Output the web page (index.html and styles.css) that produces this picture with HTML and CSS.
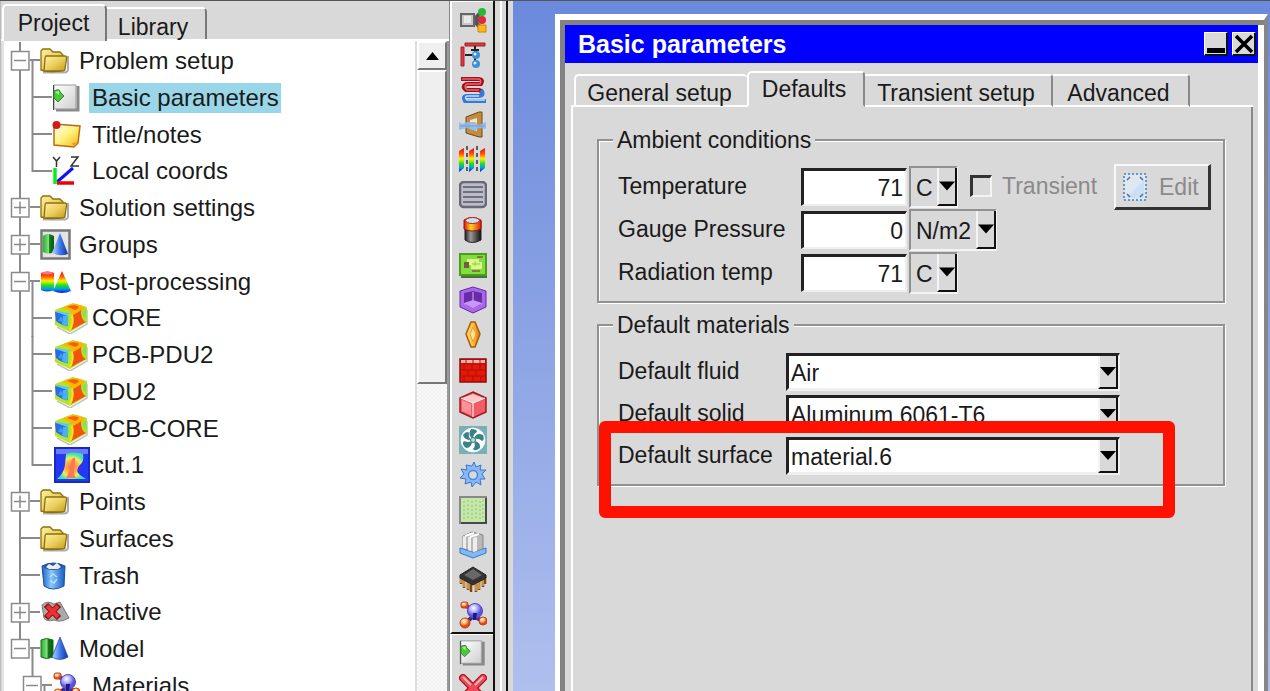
FILE: index.html
```html
<!DOCTYPE html>
<html lang="en">
<head>
<meta charset="utf-8">
<title>Basic parameters</title>
<link rel="stylesheet" href="styles.css">
</head>
<body>
<svg class="sprite" aria-hidden="true">
  <defs>
    <linearGradient id="gold" x1="0" y1="0" x2="1" y2="1"><stop offset="0" stop-color="#fff0a0"/><stop offset=".5" stop-color="#ecd060"/><stop offset="1" stop-color="#c09a18"/></linearGradient>
    <linearGradient id="note" x1="0" y1="0" x2="1" y2="1"><stop offset="0" stop-color="#fff"/><stop offset=".5" stop-color="#fff27a"/><stop offset="1" stop-color="#f0b010"/></linearGradient>
    <linearGradient id="page" x1="0" y1="0" x2="1" y2="1"><stop offset="0" stop-color="#fff"/><stop offset="1" stop-color="#cfcfcf"/></linearGradient>
    <linearGradient id="green"><stop offset="0" stop-color="#2fae2f"/><stop offset=".5" stop-color="#7fe07f"/><stop offset=".6" stop-color="#167a16"/><stop offset="1" stop-color="#0d5c0d"/></linearGradient>
    <linearGradient id="blue"><stop offset="0" stop-color="#b9d8ff"/><stop offset=".5" stop-color="#3f7be8"/><stop offset="1" stop-color="#1030a8"/></linearGradient>
    <linearGradient id="bin"><stop offset="0" stop-color="#1c62c8"/><stop offset=".4" stop-color="#8cc8f8"/><stop offset="1" stop-color="#155cc4"/></linearGradient>
    <linearGradient id="rain" x1="0" y1="0" x2="0" y2="1"><stop offset="0" stop-color="#f00020"/><stop offset=".25" stop-color="#ff5a00"/><stop offset=".45" stop-color="#fff000"/><stop offset=".65" stop-color="#20e020"/><stop offset=".82" stop-color="#00a0e0"/><stop offset="1" stop-color="#1010f0"/></linearGradient>
    <linearGradient id="cell"><stop offset="0" stop-color="#222"/><stop offset=".35" stop-color="#999"/><stop offset="1" stop-color="#111"/></linearGradient>
    <linearGradient id="celltop"><stop offset="0" stop-color="#e01010"/><stop offset=".4" stop-color="#ffd820"/><stop offset="1" stop-color="#e02010"/></linearGradient>
    <linearGradient id="gem"><stop offset="0" stop-color="#ffe28a"/><stop offset=".5" stop-color="#ffc040"/><stop offset="1" stop-color="#d87010"/></linearGradient>
    <radialGradient id="ball" cx=".4" cy=".3"><stop offset="0" stop-color="#fff"/><stop offset=".5" stop-color="#b4b4ff"/><stop offset="1" stop-color="#5c54d8"/></radialGradient>
    <radialGradient id="orange" cx=".4" cy=".3"><stop offset="0" stop-color="#fff"/><stop offset=".6" stop-color="#ffb060"/><stop offset="1" stop-color="#e04818"/></radialGradient>
    <radialGradient id="plume" cx=".5" cy=".55"><stop offset="0" stop-color="#ff7040"/><stop offset=".4" stop-color="#ffa850"/><stop offset=".7" stop-color="#e8f060"/><stop offset="1" stop-color="#40e0b0"/></radialGradient>
  </defs>

  <symbol id="g-plus" viewBox="4 0 36 37"><path class="guide" d="M20 0V9M20 28V37M30 18H40"/><path class="guide box" d="M11.500 9.500H29V28H11.500ZM14 18.500H26M20 12.500V25"/></symbol>
  <symbol id="g-open" viewBox="4 0 36 37"><path class="guide" d="M20 0V9M20 28V37M30 18H40M32.500 18V37"/><path class="guide box" d="M11.500 9.500H29V28H11.500ZM14 18.500H26"/></symbol>
  <symbol id="g-end" viewBox="4 0 36 37"><path class="guide" d="M20 0V9M30 18H40M32.500 18V37"/><path class="guide box" d="M11.500 9.500H29V28H11.500ZM14 18.500H26"/></symbol>
  <symbol id="g-leaf" viewBox="4 0 36 37"><path class="guide" d="M20 0V37M20 18H40"/></symbol>
  <symbol id="g-sub" viewBox="4 0 48 37"><path class="guide" d="M20 0V37M32.500 0V37M32 18H52"/></symbol>
  <symbol id="g-sublast" viewBox="4 0 48 37"><path class="guide" d="M20 0V37M32.500 0V19M32 18H52"/></symbol>
  <symbol id="g-subopen" viewBox="4 0 48 37"><path class="guide" d="M32.500 0V9M42 18H52M44.500 18V37"/><path class="guide box" d="M23.500 9.500H41V28H23.500ZM26 18.500H38"/></symbol>

  <symbol id="folder" viewBox="0 0 30 28"><path d="M3 25.500H25Q28 25 28 22V9" fill="none" stroke="#777" stroke-width="2" opacity=".6"/><path d="M1 23V4L3 2H10L13 5H20L23 8V23Q12 26 1 23Z" fill="url(#gold)" stroke="#8c7010" stroke-width="1.300"/><path d="M6 9H25Q27 9 26.500 12L25 22Q25 24 22 24H4L5 12Q5 10 6 9Z" fill="url(#gold)" stroke="#8c7010" stroke-width="1.300"/></symbol>
  <symbol id="pageicon" viewBox="0 0 30 30"><path d="M4 27H26V3" fill="none" stroke="#888" stroke-width="3"/><path d="M2 2H24V26H2Z" fill="url(#page)" stroke="#999"/><path d="M1.500 2V27" stroke="#444"/><path d="M2 8Q8 5 8 9L12 13L6 19L2 15Z" fill="#4cc83c" stroke="#2a8a24"/><path d="M3 9L7 8V12Z" fill="#a8f090"/></symbol>
  <symbol id="noteicon" viewBox="0 0 30 30"><path d="M2 4L28 6L26 23L22 27L2 25Z" fill="url(#note)" stroke="#c06a10" stroke-width="1.500"/><path d="M26 22L20 23L22 27Z" fill="#f0a020"/><circle cx="4.500" cy="5" r="4" fill="#d81818"/></symbol>
  <symbol id="axes" viewBox="0 0 30 32"><path d="M1 2L4.500 6L8 2M4.500 6V12M19 2H26L19 11H27" fill="none" stroke="#333" stroke-width="1.500"/><path d="M5 27L21 13" stroke="#1010f0" stroke-width="3"/><path d="M3 13V29" stroke="#00f020" stroke-width="3.500"/><path d="M5 28H22" stroke="#f00000" stroke-width="3.500"/></symbol>
  <symbol id="solids" viewBox="0 0 30 26"><path d="M1 4Q6 1 13 4V21Q6 24 1 21Z" fill="url(#green)" stroke="#157015"/><path d="M20 1L28 21Q20 26 12 21Z" fill="url(#blue)" stroke="#2040b0" stroke-width=".7"/></symbol>
  <symbol id="groups" viewBox="0 0 32 32"><path d="M1.500 1.500H29.500V29.500H1.500Z" fill="#e4e4e4" stroke="#777" stroke-width="2.500"/><path d="M3 7Q7 3 14 7V23Q8 26 3 23Z" fill="url(#green)"/><path d="M20 4L28 25Q20 28 12 24Z" fill="url(#blue)"/></symbol>
  <symbol id="post" viewBox="0 0 32 26"><path d="M1 4Q7 1 14 4V21Q7 24 1 21ZM22 2L31 22Q22 26 13 22Z" fill="url(#rain)"/><ellipse cx="7.500" cy="4" rx="6" ry="1.500" fill="#ff7080"/></symbol>
  <symbol id="cube" viewBox="0 0 34 32"><path d="M3 25L16 32L33 22V8" fill="none" stroke="#999" stroke-width="1.500" opacity=".6"/><path d="M1 8L19 1L33 5V20L16 30L1 23Z" fill="#b4e424"/><path d="M8 6Q14 2 22 2Q28 3 31 6Q28 9 25 11L17 12Q18 8 8 6Z" fill="#ffb400"/><path d="M13 5Q18 2 24 4Q26 6 21 8Q17 6 13 5Z" fill="#f46010"/><path d="M1 10Q7 10 14 14V24Q8 24 2 19Z" fill="#2a68f0"/><path d="M4 9L14 11L17 10L13 14L2 10Z" fill="#60c8e8"/><path d="M9 14L14 14Q15 21 13 25L8 22Z" fill="#48b4e8"/><path d="M4 19L7 14L10 20Z" fill="#3c9cf0"/><path d="M19 13Q25 10 27 8Q27 16 30 19L32 20L17 28Q20 20 19 13Z" fill="#f05410"/><path d="M18 13Q20 21 16 28" stroke="#ffe020" stroke-width="2" fill="none"/><path d="M32 7V16L29 14V9Z" fill="#80e060"/></symbol>
  <symbol id="cut" viewBox="0 0 36 36"><path d="M1 1H35V35H1Z" fill="#2438f4" stroke="#142cc0" stroke-width="2"/><path d="M2 2H34V7H2Z" fill="#6a7cf8"/><path d="M12 7Q18 4 29 7Q31 14 25 19Q21 24 26 28L32 32H3Q10 26 11 18Z" fill="url(#plume)"/><path d="M18 12Q22 8 21 16Q18 25 22 31H12Q17 22 17 16Z" fill="#ff7850"/></symbol>
  <symbol id="trash" viewBox="0 0 28 30"><path d="M2 5Q13 -1 25 5L24 25Q13 31 4 25Z" fill="url(#bin)" stroke="#1550a8"/><ellipse cx="13.500" cy="5.500" rx="10" ry="3.500" fill="#2458a0"/><path d="M6 6L9 3L13 5L17 2L21 6L18 8H9Z" fill="#eee"/><path d="M10 16L13 13L17 16M17 18L14 22L10 20" fill="none" stroke="#b8ddff" stroke-width="1.500"/></symbol>
  <symbol id="inactive" viewBox="0 0 30 24"><path d="M2 5Q7 0 14 4L20 2L29 18Q20 23 14 20Q6 22 4 18Z" fill="#aaa" stroke="#777"/><path d="M6 5L19 18M19 5L6 18" stroke="#801010" stroke-width="6"/><path d="M7 6L18 17M18 6L7 17" stroke="#f03030" stroke-width="4"/></symbol>
  <symbol id="molecule" viewBox="0 0 28 28"><path d="M6 22L15 15L23 20M5 4L15 9" stroke="#382890" stroke-width="4" fill="none"/><circle cx="16" cy="10" r="7.500" fill="url(#ball)" stroke="#5048c0"/><path d="M14 12H18L17 19H14Z" fill="#201880"/><rect x="2" y="1" width="7" height="6" rx="2" fill="url(#orange)" stroke="#c84018"/><circle cx="6" cy="22" r="5" fill="url(#orange)" stroke="#c84018"/><circle cx="24" cy="20" r="4" fill="url(#orange)" stroke="#c84018"/></symbol>

  <symbol id="t-assembly" viewBox="0 0 28 28"><path d="M15 14L22 6M15 14H22M15 15L22 22" stroke="#555" stroke-width="4"/><path d="M2 8H15V20H2Z" fill="#c8c8c8" stroke="#666" stroke-width="2"/><rect x="5" y="10" width="7" height="7" fill="#e8e8e8"/><circle cx="23" cy="6" r="4" fill="#28b838"/><circle cx="23" cy="14" r="4" fill="#e02838"/><path d="M19 19H27V26H19Z" fill="#ffb818" stroke="#d88000"/></symbol>
  <symbol id="t-network" viewBox="0 0 28 28"><path d="M6 2H26V5H6Z" fill="#e03840" stroke="#a02028"/><path d="M2 6H5V25H2Z" fill="#e03840" stroke="#a02028"/><path d="M16 5V24M6 14H16M12 9H20" stroke="#222" stroke-width="2" fill="none"/><circle cx="17" cy="14" r="4" fill="#3c90d8"/><circle cx="17" cy="23" r="4" fill="#3c90d8"/><circle cx="16" cy="13" r="1.500" fill="#d8f0ff"/><circle cx="16" cy="22" r="1.500" fill="#d8f0ff"/></symbol>
  <symbol id="t-coil" viewBox="0 0 28 28"><path d="M2 3H20Q25 4 22 8H8Q2 10 7 14H20Q24 15 22 18" fill="none" stroke="#a01018" stroke-width="4"/><path d="M3 3H20Q23 4 21 8H8Q4 10 8 14H20" fill="none" stroke="#f06068" stroke-width="1.500"/><path d="M22 14Q26 19 20 20H8Q3 20 6 25H27" fill="none" stroke="#3878d8" stroke-width="4"/><path d="M20 20H8Q5 21 8 24H26" fill="none" stroke="#c0e0ff" stroke-width="1.500"/></symbol>
  <symbol id="t-opening" viewBox="0 0 28 28"><path d="M7 6L20 1H23V26H20L7 22Z" fill="#c08c40" stroke="#6c4818"/><path d="M11 9L18 7V20L11 18Z" fill="#f4e4c0"/><path d="M0 11L3 13L8 11H16L20 14L27 11V18L20 17L16 20L8 17L0 19Z" fill="#90b8e8" opacity=".9"/><path d="M1 15H26" stroke="#6ca0e0"/></symbol>
  <symbol id="t-periodic" viewBox="0 0 28 28"><path d="M0 5L5 2V22L0 26ZM10 5L15 2V22L10 26ZM21 5L26 2V22L21 26Z" fill="url(#rain)"/><path d="M8 0V28M18 0V28" stroke="#333" stroke-width="1.500" stroke-dasharray="4 3"/></symbol>
  <symbol id="t-grille" viewBox="0 0 28 28"><rect x="1" y="1" width="26" height="25" rx="4" fill="#bcbcc8" stroke="#686878" stroke-width="2.500"/><path d="M4 6H24M4 11H24M4 16H24M4 21H24" stroke="#70707f" stroke-width="2"/></symbol>
  <symbol id="t-source" viewBox="0 0 28 28"><path d="M6 5V24Q13 29 22 24V5Z" fill="url(#cell)" stroke="#222"/><path d="M5 4Q13 -1 22 4V13Q13 17 5 13Z" fill="url(#celltop)" stroke="#a01010"/><ellipse cx="13.500" cy="4.500" rx="7" ry="3" fill="#c0e4f0" stroke="#c81818"/></symbol>
  <symbol id="t-board" viewBox="0 0 28 28"><path d="M2 26H28V5" stroke="#4c703c" stroke-width="2" fill="none"/><path d="M1 3H27V24H1Z" fill="#84dc40" stroke="#48a018" stroke-width="2"/><path d="M8 8H20V11H23V18H12V14H8Z" fill="#d8f890"/><rect x="5" y="11" width="5" height="6" fill="#70603c"/><path d="M18 6H24M13 20H21" stroke="#80602c" stroke-width="1.500"/><path d="M16 10V15M13 13H21" stroke="#90c838"/></symbol>
  <symbol id="t-room" viewBox="0 0 28 28"><path d="M14 1L27 5V21L14 27L1 21V5Z" fill="#a868e8" stroke="#6428a8"/><path d="M14 5L23 7V17L14 20L5 17V7Z" fill="#682ca8"/><path d="M14 6V16L5 18M14 16L23 18" stroke="#d8a8ff" fill="none"/><path d="M5 17L14 14L23 17L14 22Z" fill="#c898f8"/></symbol>
  <symbol id="t-plate" viewBox="0 0 28 28"><path d="M12 1H16L21 13L16 26H12L7 13Z" fill="url(#gem)" stroke="#a85c08" stroke-width="1.500"/><path d="M14 6L17 13L14 21L11 13Z" fill="#ffe08c" stroke="#f0a030"/></symbol>
  <symbol id="t-wall" viewBox="0 0 28 28"><path d="M1 3H27V26H1Z" fill="#e81808" stroke="#900808" stroke-width="1.500"/><path d="M2 4H26V7H2Z" fill="#ffb0b0"/><path d="M1 8H27M1 14H27M1 20H27M7 3V8M14 3V8M21 3V8M5 8V14M13 8V14M21 8V14M9 14V20M17 14V20M5 20V26M14 20V26M22 20V26" stroke="#a81008"/></symbol>
  <symbol id="t-block" viewBox="0 0 28 28"><path d="M14 1L27 7V21L14 27L1 21V7Z" fill="#f05c68" stroke="#a01820" stroke-width="1.500"/><path d="M14 3L25 7L14 12L3 7Z" fill="#ffc8c8"/><path d="M3 9L12 13V24L3 20Z" fill="#ff9098"/><path d="M14 12V26M14 12L26 7M14 12L2 7" stroke="#fff" fill="none"/></symbol>
  <symbol id="t-fan" viewBox="0 0 28 28"><rect width="28" height="28" fill="#78b0b8"/><circle cx="14" cy="14" r="12" fill="#fff" stroke="#e8f8f8"/><path d="M14 13Q8 9 12 3Q18 3 18 6Q14 8 14 13ZM15 13Q17 6 24 9Q26 14 23 15Q20 12 15 13ZM15 15Q22 16 21 22Q16 26 14 23Q17 20 15 15ZM13 15Q13 22 7 22Q2 18 5 15Q9 17 13 15ZM12 14Q5 14 4 9Q8 4 10 7Q9 11 12 14Z" fill="#3c8088"/><circle cx="14" cy="14" r="2.500" fill="#b8d8dc" stroke="#3c7880"/></symbol>
  <symbol id="t-blower" viewBox="0 0 28 28"><path d="M13 5L15 1L17 6L22 4L21 9L27 9L23 13L26 18L21 18L22 24L17 21L13 26L12 21L6 23L7 18L1 17L5 13L2 8L8 9L7 4Z" fill="#88b8f8" stroke="#3878c8"/><circle cx="14" cy="14" r="4.500" fill="#d9d9d9" stroke="#4888d8" stroke-width="1.500"/></symbol>
  <symbol id="t-resist" viewBox="0 0 28 28"><path d="M1 1H27V27H1Z" fill="#c4e8a8" stroke="#888" stroke-width="2"/><path d="M27 2V27H2" fill="none" stroke="#333" stroke-width="1.500"/><path d="M5 5V24M9 4V24M13 5V24M17 4V24M21 5V24M24 4V24" stroke="#90c078" stroke-dasharray="2 2"/></symbol>
  <symbol id="t-sink" viewBox="0 0 28 28"><path d="M1 17L14 21L27 17V22L14 27L1 22Z" fill="#80b8f8" stroke="#3878c8"/><path d="M4 5L13 1L24 4V18L14 21L4 17Z" fill="#b8b8b8" stroke="#888"/><path d="M4 5L7 6V18L4 17ZM9 6H12V20L9 19ZM14 7L18 6V20L14 21Z" fill="#eee"/><path d="M6 5L15 2M11 6L20 3" stroke="#fff" stroke-width="2"/></symbol>
  <symbol id="t-chip" viewBox="0 0 28 28"><path d="M2 11V18M5 14V22M9 16V24M12 18V26M17 18V26M20 16V24M24 14V21M26 11V18" stroke="#7c4810" stroke-width="2.500"/><path d="M2 12V17M5 14V21M9 16V23M17 18V25M20 16V23M24 14V20" stroke="#f0a840" stroke-width="1.500"/><path d="M14 1L27 9V12L14 19L1 12V9Z" fill="#333" stroke="#222"/><path d="M14 3L23 9L14 14L5 9Z" fill="#686868"/></symbol>
  <symbol id="t-delete" viewBox="0 0 28 28"><path d="M4 4L24 24M24 4L4 24" stroke="#a01820" stroke-width="8" stroke-linecap="round"/><path d="M4 4L24 24M24 4L4 24" stroke="#f04858" stroke-width="5.500" stroke-linecap="round"/><path d="M4 3L12 11M24 3L16 11" stroke="#ffb0b8" stroke-width="2"/></symbol>
  <symbol id="arrow" viewBox="0 0 16 9"><path d="M0 0H16L8 9Z"/></symbol>
  <symbol id="editicon" viewBox="0 0 26 30"><path d="M2 2H24V28H2Z" fill="#dfe8f0" stroke="#3c80c0" stroke-width="1.500" stroke-dasharray="2 2"/><path d="M4 26L22 8V26Z" fill="#c8e0f8"/><path d="M5 8L8 5M18 5L21 8M5 22L8 25M18 25L21 22" stroke="#668" stroke-width="1.500"/></symbol>
</svg>

<div class="app">
  <aside class="explorer">
    <div class="side-tabs" role="tablist">
      <button class="side-tab active" role="tab" aria-selected="true">Project</button>
      <button class="side-tab" role="tab">Library</button>
    </div>
    <div class="tree-pane">
      <ul class="tree">
        <li><svg class="g1"><use href="#g-open"/></svg><span class="icon"><svg width="30" height="28"><use href="#folder"/></svg></span><span class="name">Problem setup</span></li>
        <li><svg class="g2"><use href="#g-sub"/></svg><span class="icon"><svg width="30" height="30"><use href="#pageicon"/></svg></span><span class="name selected">Basic parameters</span></li>
        <li><svg class="g2"><use href="#g-sub"/></svg><span class="icon"><svg width="30" height="30"><use href="#noteicon"/></svg></span><span class="name">Title/notes</span></li>
        <li><svg class="g2"><use href="#g-sublast"/></svg><span class="icon"><svg width="30" height="32"><use href="#axes"/></svg></span><span class="name">Local coords</span></li>
        <li><svg class="g1"><use href="#g-plus"/></svg><span class="icon"><svg width="30" height="28"><use href="#folder"/></svg></span><span class="name">Solution settings</span></li>
        <li><svg class="g1"><use href="#g-plus"/></svg><span class="icon"><svg width="32" height="32"><use href="#groups"/></svg></span><span class="name">Groups</span></li>
        <li><svg class="g1"><use href="#g-open"/></svg><span class="icon"><svg width="32" height="26"><use href="#post"/></svg></span><span class="name">Post-processing</span></li>
        <li><svg class="g2"><use href="#g-sub"/></svg><span class="icon wide"><svg width="34" height="32"><use href="#cube"/></svg></span><span class="name">CORE</span></li>
        <li><svg class="g2"><use href="#g-sub"/></svg><span class="icon wide"><svg width="34" height="32"><use href="#cube"/></svg></span><span class="name">PCB-PDU2</span></li>
        <li><svg class="g2"><use href="#g-sub"/></svg><span class="icon wide"><svg width="34" height="32"><use href="#cube"/></svg></span><span class="name">PDU2</span></li>
        <li><svg class="g2"><use href="#g-sub"/></svg><span class="icon wide"><svg width="34" height="32"><use href="#cube"/></svg></span><span class="name">PCB-CORE</span></li>
        <li><svg class="g2"><use href="#g-sublast"/></svg><span class="icon wide"><svg width="36" height="36"><use href="#cut"/></svg></span><span class="name">cut.1</span></li>
        <li><svg class="g1"><use href="#g-plus"/></svg><span class="icon"><svg width="30" height="28"><use href="#folder"/></svg></span><span class="name">Points</span></li>
        <li><svg class="g1"><use href="#g-leaf"/></svg><span class="icon"><svg width="30" height="28"><use href="#folder"/></svg></span><span class="name">Surfaces</span></li>
        <li><svg class="g1"><use href="#g-leaf"/></svg><span class="icon"><svg width="28" height="30"><use href="#trash"/></svg></span><span class="name">Trash</span></li>
        <li><svg class="g1"><use href="#g-plus"/></svg><span class="icon"><svg width="30" height="24"><use href="#inactive"/></svg></span><span class="name">Inactive</span></li>
        <li><svg class="g1"><use href="#g-end"/></svg><span class="icon"><svg width="30" height="26"><use href="#solids"/></svg></span><span class="name">Model</span></li>
        <li><svg class="g2"><use href="#g-subopen"/></svg><span class="icon"><svg width="28" height="28"><use href="#molecule"/></svg></span><span class="name">Materials</span></li>
      </ul>
      <div class="scrollbar">
        <button class="scroll-up" aria-label="Scroll up"><svg width="13" height="8" viewBox="0 0 13 8"><path d="M0 8H13L6.500 0Z"/></svg></button>
        <div class="thumb"></div>
      </div>
    </div>
  </aside>

  <nav class="toolbar" aria-label="Objects">
    <div class="tools">
      <button aria-label="Assembly"><svg><use href="#t-assembly"/></svg></button>
      <button aria-label="Network"><svg><use href="#t-network"/></svg></button>
      <button aria-label="Heat exchanger"><svg><use href="#t-coil"/></svg></button>
      <button aria-label="Opening"><svg><use href="#t-opening"/></svg></button>
      <button aria-label="Periodic boundary"><svg><use href="#t-periodic"/></svg></button>
      <button aria-label="Grille"><svg><use href="#t-grille"/></svg></button>
      <button aria-label="Source"><svg><use href="#t-source"/></svg></button>
      <button aria-label="Circuit board"><svg><use href="#t-board"/></svg></button>
      <button aria-label="Enclosure"><svg><use href="#t-room"/></svg></button>
      <button aria-label="Plate"><svg><use href="#t-plate"/></svg></button>
      <button aria-label="Wall"><svg><use href="#t-wall"/></svg></button>
      <button aria-label="Block"><svg><use href="#t-block"/></svg></button>
      <button aria-label="Fan"><svg><use href="#t-fan"/></svg></button>
      <button aria-label="Blower"><svg><use href="#t-blower"/></svg></button>
      <button aria-label="Resistance"><svg><use href="#t-resist"/></svg></button>
      <button aria-label="Heat sink"><svg><use href="#t-sink"/></svg></button>
      <button aria-label="Package"><svg><use href="#t-chip"/></svg></button>
      <button aria-label="Materials"><svg><use href="#molecule"/></svg></button>
    </div>
    <div class="tools actions">
      <button aria-label="Edit object"><svg><use href="#pageicon"/></svg></button>
      <button aria-label="Delete object"><svg><use href="#t-delete"/></svg></button>
    </div>
  </nav>
  <div class="sash"><div class="sash-line"></div></div>

  <main class="canvas">
    <section class="dialog" aria-labelledby="dialog-title">
      <header class="titlebar">
        <h1 id="dialog-title">Basic parameters</h1>
        <button class="winbtn" aria-label="Minimize"><svg width="20" height="20" viewBox="0 0 20 20"><path d="M1 14H19V19H1Z"/></svg></button>
        <button class="winbtn" aria-label="Close"><svg width="20" height="20" viewBox="0 0 20 20"><path d="M2 2L18 18M18 2L2 18" stroke="#000" stroke-width="3.500"/></svg></button>
      </header>
      <div class="tabs" role="tablist">
        <span class="tab-gap"></span>
        <button class="tab first" role="tab">General setup</button>
        <button class="tab active" role="tab" aria-selected="true">Defaults</button>
        <button class="tab transient" role="tab">Transient setup</button>
        <button class="tab advanced" role="tab">Advanced</button>
        <span class="tab-rest"></span>
      </div>
      <form class="panel">
        <fieldset class="group ambient">
          <legend>Ambient conditions</legend>
          <div class="rows">
            <div class="row">
              <label for="temp">Temperature</label>
              <input class="number" id="temp" type="text" value="71">
              <span class="unit"><select aria-label="Temperature unit"><option>C</option></select><svg class="drop"><use href="#arrow"/></svg></span>
              <input class="check" id="transient" type="checkbox" disabled>
              <label class="off" for="transient">Transient</label>
              <button class="edit" type="button" disabled><svg width="26" height="30"><use href="#editicon"/></svg>Edit</button>
            </div>
            <div class="row">
              <label for="pressure">Gauge Pressure</label>
              <input class="number" id="pressure" type="text" value="0">
              <span class="unit long"><select aria-label="Pressure unit"><option>N/m2</option></select><svg class="drop"><use href="#arrow"/></svg></span>
            </div>
            <div class="row">
              <label for="radiation">Radiation temp</label>
              <input class="number" id="radiation" type="text" value="71">
              <span class="unit"><select aria-label="Radiation unit"><option>C</option></select><svg class="drop"><use href="#arrow"/></svg></span>
            </div>
          </div>
        </fieldset>
        <div class="materials-wrap">
          <fieldset class="group materials">
            <legend>Default materials</legend>
            <div class="rows">
              <div class="row"><label for="fluid">Default fluid</label><span class="combo"><select id="fluid"><option>Air</option></select><svg class="drop"><use href="#arrow"/></svg></span></div>
              <div class="row"><label for="solid">Default solid</label><span class="combo"><select id="solid"><option>Aluminum 6061-T6</option></select><svg class="drop"><use href="#arrow"/></svg></span></div>
              <div class="row"><label for="surface">Default surface</label><span class="combo"><select id="surface"><option>material.6</option></select><svg class="drop"><use href="#arrow"/></svg></span></div>
            </div>
          </fieldset>
          <div class="highlight"></div>
        </div>
      </form>
    </section>
  </main>
</div>
</body>
</html>
```
FILE: styles.css
```css
* { box-sizing: border-box; }
html, body { height: 100%; }
body {
  margin: 0;
  overflow: hidden;
  background: #d9d9d9;
  color: #1a1a1a;
  font: 23px/28px "Liberation Sans", Arial, sans-serif;
}
button, input, select { font: inherit; color: inherit; margin: 0; padding: 0; border-radius: 0; }
button { background: #d9d9d9; border: 0; }
svg { display: block; flex: none; }
.sprite { position: absolute; width: 0; height: 0; }

.app { display: flex; height: 100%; border-top: 1px solid #555; }

/* Project explorer */
.explorer { flex: none; width: 449px; display: flex; flex-direction: column; border-left: 1px solid #bbb; }
.side-tabs { display: flex; align-items: flex-end; height: 40px; padding-left: 1px; border-bottom: 2px solid #fff; }
.side-tab {
  height: 32px; width: 100px; padding-top: 4px; padding-right: 6px;
  border-top: 2px solid #fff; border-right: 2px solid #777; border-top-right-radius: 5px;
}
.side-tab.active { width: 105px; height: 37px; margin-bottom: -2px; padding: 0 2px 2px 0; border-left: 2px solid #fff; border-top-left-radius: 5px; }
.tree-pane { flex: 1; min-height: 0; display: flex; margin-left: 1px; border-left: 2px solid #e4e4e4; border-right: 2px solid #999; background: #fff; }
.tree { flex: 1; margin: 0; padding: 1px 0 0; list-style: none; font-size: 24px; }
.tree li { display: flex; align-items: center; height: 37px; white-space: nowrap; }
.tree li:nth-child(4n) { height: 36px; }
.g1 { width: 36px; height: 37px; }
.g2 { width: 48px; height: 37px; }
.guide { fill: none; stroke: #8a8a8a; stroke-width: 2; }
.guide.box { stroke-width: 1.500; }
.icon { flex: none; width: 37px; }
.icon.wide { padding-left: 2px; }
.g1 + .icon { width: 36px; }
.name { height: 30px; line-height: 30px; padding: 0 2px 0 3px; }
.selected { background: #99d7e8; }
.scrollbar {
  flex: none; width: 32px; display: flex; flex-direction: column; border-left: 2px solid #ddd;
  background: repeating-conic-gradient(#f0f0f0 0 25%, #fafafa 0 50%) 0 0 / 4px 4px;
}
.scroll-up, .thumb { background: #efefef; border: 2px solid #fff; border-right-color: #777; border-bottom-color: #777; }
.scroll-up { display: flex; align-items: center; justify-content: center; height: 29px; }
.thumb { height: 314px; }

/* Object toolbar */
.toolbar { flex: none; width: 46px; border-left: 1px solid #888; border-right: 2px solid #111; display: flex; flex-direction: column; overflow: hidden; }
.tools { flex: none; border-left: 2px solid #fff; border-top: 1px solid #fff; border-bottom: 2px solid #111; }
.tools button { display: flex; align-items: center; justify-content: center; width: 100%; height: 35px; }
.tools svg { width: 28px; height: 28px; }
.actions { border-bottom: 0; }
.sash { flex: none; width: 18px; display: flex; padding-left: 5px; }
.sash-line { width: 8px; border-left: 2px solid #fff; border-right: 2px solid #111; }

/* Graphics area with dialog window */
.canvas { flex: 1; min-width: 0; display: flex; padding: 13px 2px 0 42px; background: linear-gradient(#6b8adc, #afbfee); }
.dialog { flex: 1; min-width: 0; display: flex; flex-direction: column; border: solid #fff; border-width: 6px 4px 0 5px; border-right-color: #868686; background: #d9d9d9; box-shadow: inset 5px 5px #828282, inset -6px 0 #fff; padding: 5px 6px 0 5px; }
.titlebar { display: flex; align-items: center; gap: 4px; height: 38px; padding: 0 2px 0 13px; background: #00f; }
.titlebar h1 { flex: 1; margin: 0; font-size: 25px; line-height: 30px; font-weight: bold; color: #fff; }
.winbtn { width: 24px; height: 24px; border: 1px solid #fff; border-right: 2px solid #111; border-bottom: 2px solid #111; display: flex; align-items: center; justify-content: center; }
.tabs { display: flex; align-items: flex-end; height: 44px; margin: 0 5px 0 6px; }
.tab-gap { width: 3px; border-bottom: 2px solid #fff; }
.tab { height: 33px; padding: 3px 4px 0 0; white-space: nowrap; border-top: 2px solid #fff; border-bottom: 2px solid #fff; border-right: 2px solid #888; border-top-right-radius: 4px; }
.tab.first { width: 173px; border-left: 2px solid #fff; border-right: 0; border-top-left-radius: 5px; }
.tab.active { width: 118px; height: 36px; padding: 2px 4px 2px 0; border-left: 2px solid #fff; border-bottom-color: #d9d9d9; border-top-left-radius: 5px; }
.tab.transient { width: 188px; }
.tab.advanced { width: 137px; }
.tab-rest { flex: 1; border-bottom: 2px solid #fff; }
.panel { flex: 1; margin: 0 5px 0 6px; padding: 19px 26px 0 24px; border-left: 2px solid #fff; border-right: 2px solid #888; }

.group { margin: 0; min-width: 0; border: 2px solid #919191; box-shadow: inset 1px 1px #fff, 1px 1px #fff; padding: 12px 12px 7px 14px; }
.group legend { padding: 0 4px; background: #d9d9d9; }
.rows { display: flex; flex-direction: column; gap: 1px; padding-left: 5px; }
.row { display: flex; align-items: center; }
.row label { padding-bottom: 2px; }
.ambient .row { height: 42px; }
.ambient .row > label:first-child { width: 183px; }
.number { width: 106px; height: 38px; padding: 2px 2px 0 0; text-align: right; background: #fff; border: solid #222; border-width: 3px 2px 2px 3px; border-right-color: #eee; border-bottom-color: #eee; }
.unit, .combo { display: grid; align-items: center; }
.unit > *, .combo > * { grid-area: 1 / 1; }
select { appearance: none; width: 100%; outline: 0; }
.unit { width: 49px; height: 42px; margin-left: 2px; }
.unit.long { width: 88px; }
.unit select { height: 42px; padding: 1px 0 0 5px; background: #d9d9d9; border: 2px solid #919191; border-right-color: #f4f4f4; border-bottom-color: #f4f4f4; }
.drop { justify-self: end; width: 20px; height: 38px; pointer-events: none; background: #d9d9d9; border-left: 2px solid #f4f4f4; border-right: 2px solid #111; border-bottom: 2px solid #111; }
.unit .drop { margin-right: 1px; }
.check { appearance: none; width: 22px; height: 22px; margin: 0 10px 2px 12px; border: 3px solid #333; border-right: 2px solid #f4f4f4; border-bottom: 2px solid #f4f4f4; }
.off, .edit { color: #8a8a8a; }
.edit { display: flex; align-items: center; gap: 11px; width: 97px; height: 46px; margin-left: auto; padding-left: 6px; border: 2px solid #f8f8f8; border-right: 3px solid #333; border-bottom: 3px solid #333; }

.materials-wrap { position: relative; margin-top: 8px; }
.materials { padding: 14px 103px 9px 14px; }
.materials .rows { gap: 4px; }
.materials label { flex: none; width: 168px; }
.combo { flex: 1; height: 38px; }
.combo select { height: 38px; padding: 2px 0 0 2px; background: #fff; border: 3px solid #222; border-right: 2px solid #f0f0f0; border-bottom: 3px solid #f0f0f0; }
.combo .drop { height: 33px; margin-right: 2px; }
.highlight { position: absolute; left: 2px; right: 50px; top: 110px; height: 97px; border: 12px solid #ff1100; border-radius: 6px; pointer-events: none; }
```
